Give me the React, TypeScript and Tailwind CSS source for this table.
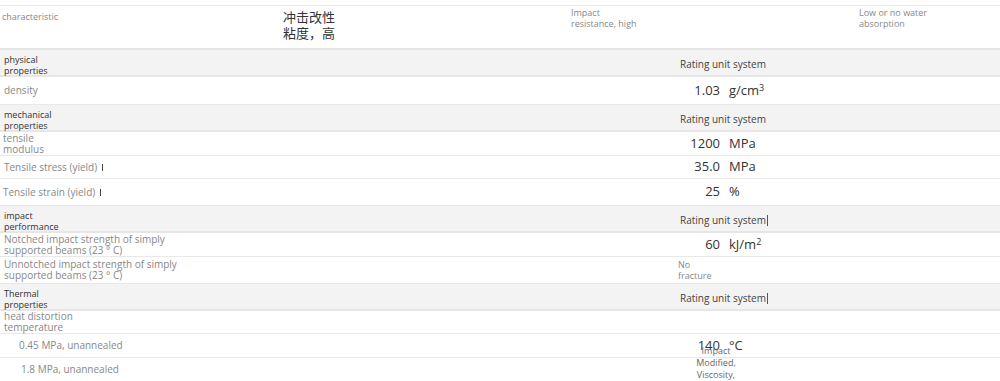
import type { ReactNode } from "react";

const font = { fontFamily: '"Open Sans", "Noto Sans CJK SC", sans-serif' };

function Header({ title, mark }: { title: ReactNode; mark?: boolean }) {
  return (
    <div className="flex h-[27px] border-b-2 border-[#e6e6e6] bg-[#f3f3f3]">
      <div className="w-[676px] pl-1 pt-[4px] text-[9px] leading-[11px] text-[#333]">{title}</div>
      <div className="flex items-center pl-1 pt-[3px] text-[10px] text-[#444]">
        Rating unit system
        {mark && <span className="ml-[1px] h-[11px] w-[1px] bg-[#555]" />}
      </div>
    </div>
  );
}

function Row({
  label,
  h,
  value,
  unit,
  pad = "pl-[3px]",
  mark,
  children,
}: {
  label: ReactNode;
  h: string;
  value?: string;
  unit?: ReactNode;
  pad?: string;
  mark?: boolean;
  children?: ReactNode;
}) {
  return (
    <div className={`flex border-b border-[#e8e8e8] bg-white ${h}`}>
      <div className={`flex w-[676px] items-center text-[10px] leading-[11px] text-[#888] ${pad}`}>
        <span>{label}</span>
        {mark && <span className="ml-[5px] h-[7px] w-[1px] bg-[#444]" />}
      </div>
      {value !== undefined ? (
        <div className="flex items-center text-[13px] text-[#333]">
          <span className="w-[44px] text-right">{value}</span>
          <span className="ml-[9px]">{unit}</span>
        </div>
      ) : (
        children
      )}
    </div>
  );
}

export default function App() {
  return (
    <div className="relative h-[381px] w-[1000px] overflow-hidden bg-white" style={font}>
      <div className="h-[6px] border-b border-[#e8e8e8]" />
      <div className="grid h-[44px] grid-cols-[283px_288px_288px_1fr] border-b-2 border-[#e6e6e6]">
        <div className="pl-[2px] pt-[5px] text-[9px] leading-[11px] text-[#888]">characteristic</div>
        <div className="pt-[3px] text-[13px] leading-[16px] text-[#333]">
          冲击改性
          <br />
          粘度，高
        </div>
        <div className="pt-[1px] text-[9px] leading-[11px] text-[#888]">
          Impact
          <br />
          resistance, high
        </div>
        <div className="pt-[1px] text-[9px] leading-[11px] text-[#888]">
          Low or no water
          <br />
          absorption
        </div>
      </div>

      <Header title={<>physical<br />properties</>} />
      <Row label="density" h="h-[28px]" value="1.03" unit={<>g/cm<span className="text-[9px] align-top">3</span></>} pad="pl-1" />

      <Header title={<>mechanical<br />properties</>} />
      <Row label={<>tensile<br />modulus</>} h="h-[24px]" value="1200" unit="MPa" />
      <Row label="Tensile stress (yield)" h="h-[23px]" value="35.0" unit="MPa" pad="pl-1" mark />
      <Row label="Tensile strain (yield)" h="h-[27px]" value="25" unit="%" mark />

      <Header title={<>impact<br />performance</>} mark />
      <Row label={<>Notched impact strength of simply<br />supported beams (23 ° C)</>} h="h-[24px]" value="60" unit={<>kJ/m<span className="text-[9px] align-top">2</span></>} pad="pl-1" />
      <Row label={<>Unnotched impact strength of simply<br />supported beams (23 ° C)</>} h="h-[27px]" pad="pl-1">
        <div className="flex items-center pl-[2px] text-[9px] leading-[11px] text-[#888]">
          No
          <br />
          fracture
        </div>
      </Row>

      <Header title={<>Thermal<br />properties</>} mark />
      <Row label={<>heat distortion<br />temperature</>} h="h-[23px]" pad="pl-1" />
      <Row label="0.45 MPa, unannealed" h="h-[24px]" value="140" unit="°C" pad="pl-[19px]" />
      <Row label="1.8 MPa, unannealed" h="h-[24px]" pad="pl-[21px]" />

      <div className="absolute left-[694px] top-[345px] w-[44px] text-center text-[9px] leading-[12px] text-[#666]">
        Impact
        <br />
        Modified,
        <br />
        Viscosity,
      </div>
    </div>
  );
}
